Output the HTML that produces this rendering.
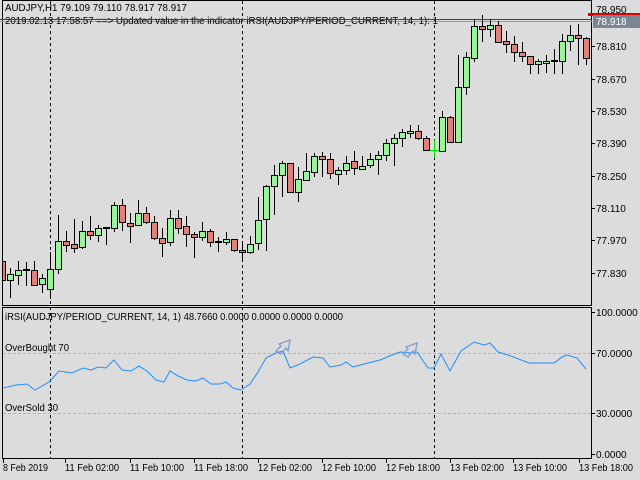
<!DOCTYPE html>
<html><head><meta charset="utf-8"><style>
html,body{margin:0;padding:0;background:#dcdcdc;width:640px;height:480px;overflow:hidden}
svg{display:block}
text{font-family:"Liberation Sans",sans-serif;font-size:10px;fill:#000}
</style></head><body>
<svg width="640" height="480" viewBox="0 0 640 480" xmlns="http://www.w3.org/2000/svg" shape-rendering="crispEdges">
<rect width="640" height="480" fill="#dcdcdc"/>
<rect x="2.5" y="0.5" width="589" height="305" fill="none" stroke="#000"/>
<rect x="2.5" y="307.5" width="589" height="151" fill="none" stroke="#000"/>
<g stroke="#000" stroke-dasharray="3,3">
<line x1="50.5" y1="1" x2="50.5" y2="458"/>
<line x1="242.5" y1="1" x2="242.5" y2="458"/>
<line x1="434.5" y1="1" x2="434.5" y2="458"/>
</g>
<line x1="0" y1="19.5" x2="592" y2="19.5" stroke="#e00000"/>
<line x1="0" y1="21.5" x2="592" y2="21.5" stroke="#9a9a9a"/>
<g stroke="#000" stroke-width="1">
<path d="M10.5 268V298M18.5 261V285M26.5 262V286M34.5 261V286M42.5 274V293M50.5 252V299M58.5 215V274M66.5 231V252M74.5 219V253M82.5 221V249M90.5 216V240M98.5 225V242M106.5 227V245M114.5 202V232M122.5 199V231M130.5 213V243M138.5 200V226M146.5 207V224M154.5 216V240M162.5 228V257M170.5 210V246M178.5 210V234M186.5 216V247M194.5 232V258M202.5 222V241M210.5 229V247M218.5 237V252M226.5 232V245M234.5 239V252M242.5 242V259M250.5 236V254M258.5 197V250M266.5 185V251M274.5 165V215M282.5 161V197M290.5 163V192M298.5 167V202M306.5 153V181M314.5 153V177M322.5 152V177M330.5 153V179M338.5 167V185M346.5 156V175M354.5 151V175M362.5 156V170M370.5 153V168M378.5 151V175M386.5 139V161M394.5 134V166M402.5 129V147M410.5 125V138M418.5 125V140M426.5 136V150M442.5 111V151M450.5 116V143M458.5 55V142M466.5 52V95M474.5 20V62M482.5 15V42M490.5 19V37M498.5 21V42M506.5 31V53M514.5 36V62M522.5 42V62M530.5 56V74M538.5 59V74M546.5 55V73M554.5 49V74M562.5 34V74M570.5 25V51M578.5 24V65M586.5 37V65"/>
</g>
<g stroke="#000" fill="#9af59a">
<rect x="7.5" y="274.5" width="6" height="6"/>
<rect x="15.5" y="270.5" width="6" height="5"/>
<rect x="39.5" y="278.5" width="6" height="6"/>
<rect x="47.5" y="269.5" width="6" height="20"/>
<rect x="55.5" y="241.5" width="6" height="28"/>
<rect x="79.5" y="231.5" width="6" height="16"/>
<rect x="95.5" y="228.5" width="6" height="7"/>
<rect x="111.5" y="205.5" width="6" height="23"/>
<rect x="135.5" y="213.5" width="6" height="12"/>
<rect x="167.5" y="218.5" width="6" height="24"/>
<rect x="199.5" y="231.5" width="6" height="6"/>
<rect x="223.5" y="239.5" width="6" height="3"/>
<rect x="247.5" y="244.5" width="6" height="8"/>
<rect x="255.5" y="220.5" width="6" height="23"/>
<rect x="263.5" y="186.5" width="6" height="33"/>
<rect x="271.5" y="175.5" width="6" height="11"/>
<rect x="279.5" y="163.5" width="6" height="12"/>
<rect x="295.5" y="179.5" width="6" height="13"/>
<rect x="303.5" y="171.5" width="6" height="9"/>
<rect x="311.5" y="156.5" width="6" height="16"/>
<rect x="335.5" y="170.5" width="6" height="4"/>
<rect x="343.5" y="163.5" width="6" height="7"/>
<rect x="359.5" y="166.5" width="6" height="3"/>
<rect x="367.5" y="159.5" width="6" height="6"/>
<rect x="375.5" y="155.5" width="6" height="4"/>
<rect x="383.5" y="143.5" width="6" height="12"/>
<rect x="391.5" y="138.5" width="6" height="5"/>
<rect x="399.5" y="132.5" width="6" height="6"/>
<rect x="407.5" y="131.5" width="6" height="2"/>
<rect x="439.5" y="117.5" width="6" height="34"/>
<rect x="455.5" y="87.5" width="6" height="55"/>
<rect x="463.5" y="57.5" width="6" height="30"/>
<rect x="471.5" y="26.5" width="6" height="32"/>
<rect x="487.5" y="25.5" width="6" height="4"/>
<rect x="535.5" y="61.5" width="6" height="3"/>
<rect x="543.5" y="61.5" width="6" height="2"/>
<rect x="559.5" y="41.5" width="6" height="20"/>
<rect x="567.5" y="35.5" width="6" height="6"/>
</g>
<g stroke="#000" fill="#e08078">
<rect x="2.5" y="261.5" width="3" height="19"/>
<rect x="31.5" y="270.5" width="6" height="15"/>
<rect x="63.5" y="241.5" width="6" height="4"/>
<rect x="71.5" y="244.5" width="6" height="4"/>
<rect x="87.5" y="231.5" width="6" height="4"/>
<rect x="119.5" y="205.5" width="6" height="17"/>
<rect x="127.5" y="223.5" width="6" height="3"/>
<rect x="143.5" y="213.5" width="6" height="9"/>
<rect x="151.5" y="222.5" width="6" height="16"/>
<rect x="159.5" y="238.5" width="6" height="5"/>
<rect x="175.5" y="218.5" width="6" height="10"/>
<rect x="183.5" y="226.5" width="6" height="8"/>
<rect x="191.5" y="234.5" width="6" height="3"/>
<rect x="207.5" y="231.5" width="6" height="11"/>
<rect x="231.5" y="239.5" width="6" height="11"/>
<rect x="239.5" y="250.5" width="6" height="2"/>
<rect x="287.5" y="163.5" width="6" height="29"/>
<rect x="319.5" y="156.5" width="6" height="3"/>
<rect x="327.5" y="159.5" width="6" height="14"/>
<rect x="351.5" y="161.5" width="6" height="7"/>
<rect x="415.5" y="131.5" width="6" height="7"/>
<rect x="423.5" y="138.5" width="6" height="12"/>
<rect x="447.5" y="117.5" width="6" height="25"/>
<rect x="479.5" y="26.5" width="6" height="3"/>
<rect x="495.5" y="25.5" width="6" height="17"/>
<rect x="503.5" y="41.5" width="6" height="3"/>
<rect x="511.5" y="44.5" width="6" height="8"/>
<rect x="519.5" y="52.5" width="6" height="4"/>
<rect x="527.5" y="56.5" width="6" height="8"/>
<rect x="575.5" y="35.5" width="6" height="3"/>
<rect x="583.5" y="38.5" width="6" height="20"/>
</g>
<g fill="#000">
<rect x="23" y="269" width="7" height="2"/>
<rect x="103" y="227" width="7" height="2"/>
<rect x="215" y="241" width="7" height="2"/>
<rect x="551" y="60" width="7" height="2"/>
</g>
<g stroke="#00e000"><line x1="434.5" y1="140" x2="434.5" y2="158"/><line x1="430" y1="150.5" x2="439" y2="150.5"/></g>
<text x="5" y="11" textLength="182" lengthAdjust="spacingAndGlyphs">AUDJPY,H1  79.109 79.110 78.917 78.917</text>
<text x="5" y="24" textLength="433" lengthAdjust="spacingAndGlyphs">2019.02.13 17:58:57 ==&gt;  Updated value in the indicator iRSI(AUDJPY/PERIOD_CURRENT, 14, 1): 1</text>
<line x1="0" y1="19.5" x2="440" y2="19.5" stroke="#e00000"/>
<rect x="588" y="13" width="52" height="3" fill="#e00000"/>
<rect x="593" y="15" width="47" height="13" fill="#7b8794"/>
<g>
<text x="596" y="13">78.950</text>
<text x="596" y="25" style="fill:#fff">78.918</text>
<text x="596" y="50">78.810</text>
<text x="596" y="83">78.670</text>
<text x="596" y="115">78.530</text>
<text x="596" y="147">78.390</text>
<text x="596" y="180">78.250</text>
<text x="596" y="212">78.110</text>
<text x="596" y="244">77.970</text>
<text x="596" y="277">77.830</text>
</g>
<g stroke="#000"><path d="M592 46.5h3M592 79.5h3M592 111.5h3M592 143.5h3M592 176.5h3M592 208.5h3M592 240.5h3M592 273.5h3M592 312.5h3M592 353.5h3M592 413.5h3M592 454.5h3"/></g>
<text x="5" y="320" textLength="338" lengthAdjust="spacingAndGlyphs">iRSI(AUDJPY/PERIOD_CURRENT, 14, 1) 48.7660 0.0000 0.0000 0.0000 0.0000</text>
<g stroke="#b4b4b4" stroke-dasharray="3,2"><line x1="3" y1="353.5" x2="591" y2="353.5"/><line x1="3" y1="413.5" x2="591" y2="413.5"/></g>
<text x="5" y="351" textLength="64" lengthAdjust="spacingAndGlyphs">OverBought 70</text>
<text x="5" y="411" textLength="53" lengthAdjust="spacingAndGlyphs">OverSold 30</text>
<text x="596" y="316">100.0000</text>
<text x="596" y="357">70.0000</text>
<text x="596" y="417">30.0000</text>
<text x="596" y="458">0.0000</text>
<polyline shape-rendering="auto" fill="none" stroke="#1e90ff" stroke-width="1" points="3,388 16,385 27,384 35,390 49,382 59,371 72,373 83,368 91,370 98,367 106,368 114,360 122,370 131,371 139,366 147,371 156,380 164,382 170,371 178,376 187,380 196,381 203,378 211,384 220,384 226,382 233,388 241,390 250,384 258,372 266,358 276,353 283,351 290,368 300,364 313,357 323,358 330,367 341,365 346,362 353,367 372,362 380,360 392,355 400,352 410,353 417,352 428,368 434,368 441,354 450,371 461,351 474,342 484,345 490,343 498,352 508,355 529,363 554,363 562,357 567,355 577,358 586,369"/>
<g shape-rendering="auto" fill="none" stroke="#7f9ccc" stroke-width="1.3">
<path d="M276 351 L281 346 L279 344 L290 340 L288 351 L286 348 L281 354 Z"/>
<path d="M403 354 L408 349 L406 347 L417 343 L415 354 L413 351 L408 357 Z"/>
</g>
<g stroke="#000"><path d="M3.5 459v4M65.5 459v4M130.5 459v4M194.5 459v4M258.5 459v4M322.5 459v4M386.5 459v4M450.5 459v4M513.5 459v4M579.5 459v4"/></g>
<text x="3" y="471" textLength="45" lengthAdjust="spacingAndGlyphs">8 Feb 2019</text>
<text x="65" y="471" textLength="54" lengthAdjust="spacingAndGlyphs">11 Feb 02:00</text>
<text x="130" y="471" textLength="54" lengthAdjust="spacingAndGlyphs">11 Feb 10:00</text>
<text x="194" y="471" textLength="54" lengthAdjust="spacingAndGlyphs">11 Feb 18:00</text>
<text x="258" y="471" textLength="54" lengthAdjust="spacingAndGlyphs">12 Feb 02:00</text>
<text x="322" y="471" textLength="54" lengthAdjust="spacingAndGlyphs">12 Feb 10:00</text>
<text x="386" y="471" textLength="54" lengthAdjust="spacingAndGlyphs">12 Feb 18:00</text>
<text x="450" y="471" textLength="54" lengthAdjust="spacingAndGlyphs">13 Feb 02:00</text>
<text x="513" y="471" textLength="54" lengthAdjust="spacingAndGlyphs">13 Feb 10:00</text>
<text x="579" y="471" textLength="54" lengthAdjust="spacingAndGlyphs">13 Feb 18:00</text>
</svg>
</body></html>
